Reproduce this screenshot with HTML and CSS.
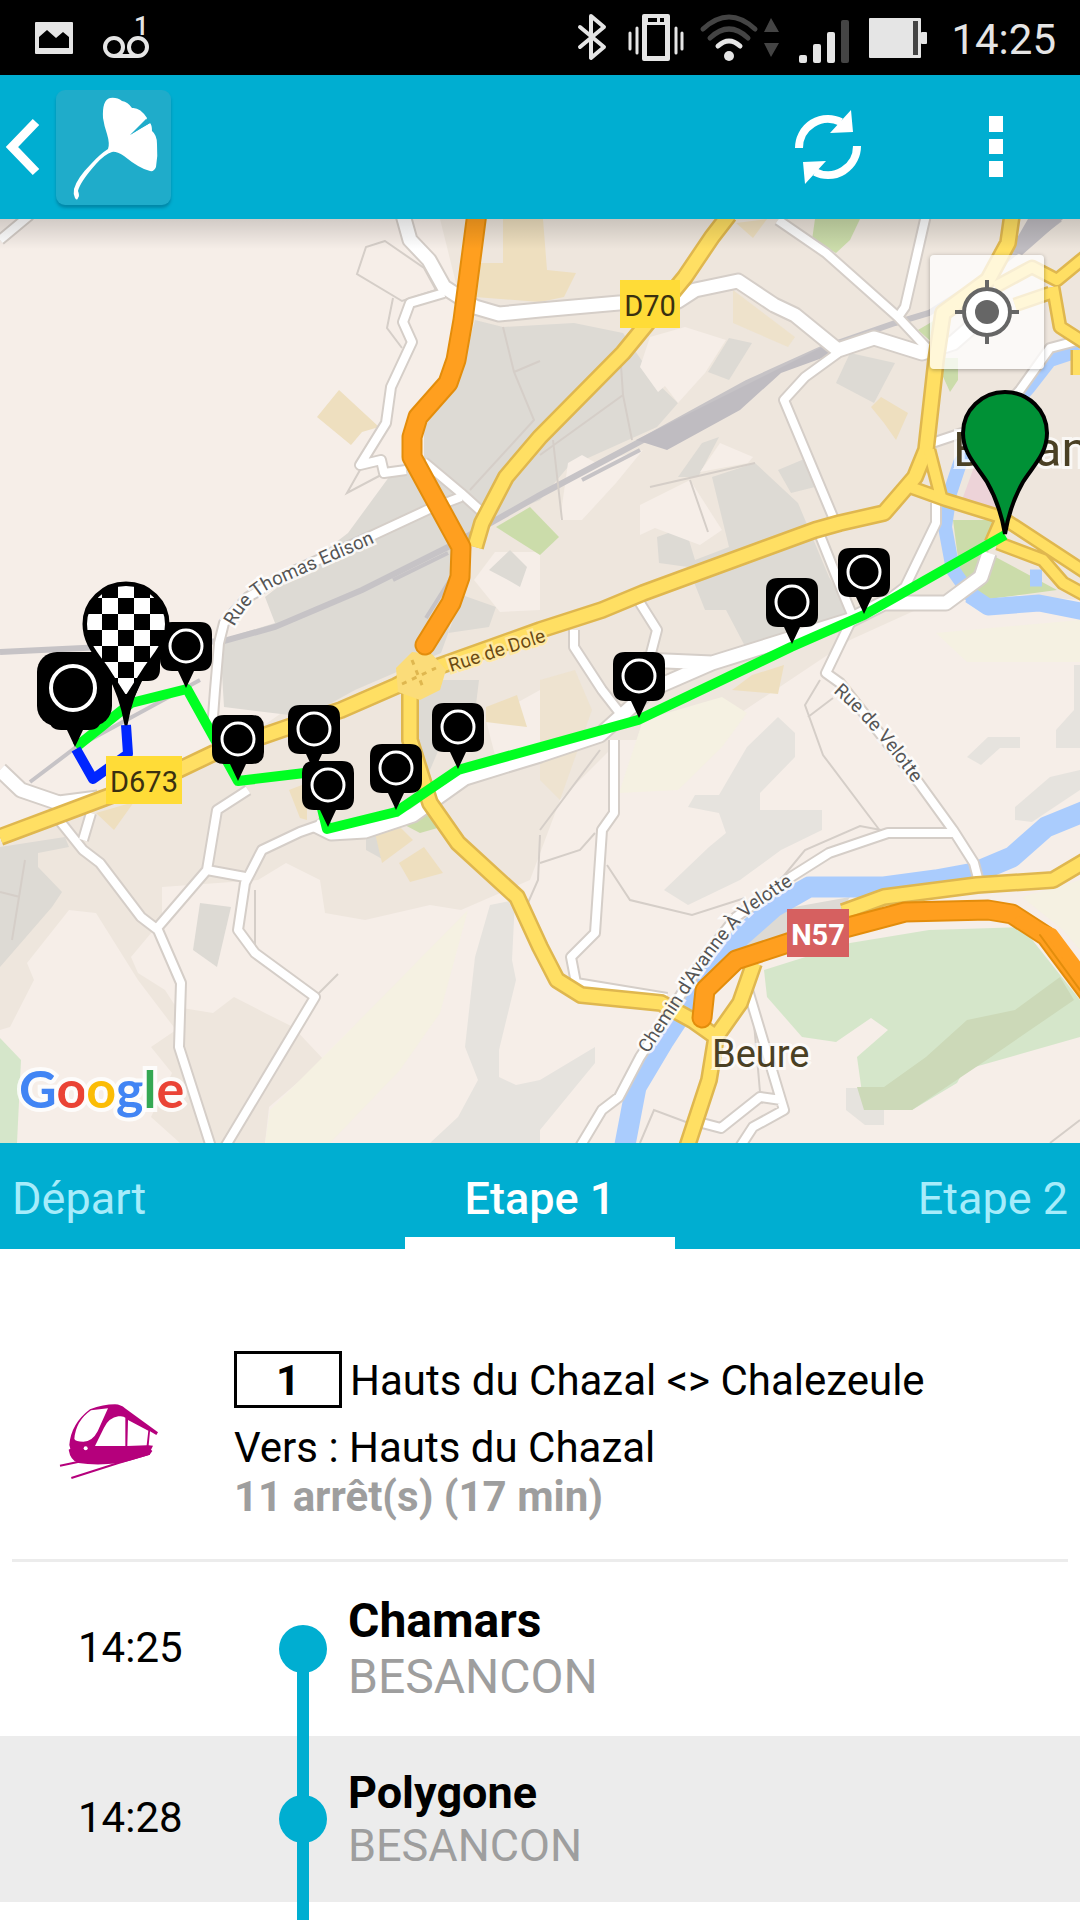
FILE: index.html
```html
<!DOCTYPE html>
<html lang="fr">
<head>
    <meta charset="UTF-8">
    <meta name="viewport" content="width=device-width, initial-scale=1.0">
    <title>Itinéraire - Etape 1</title>
    <link rel="stylesheet" href="styles.css">
</head>
<body>
<div class="app">

    <!-- Barre d'état -->
    <div class="status-bar">
        <div class="status-left">
            <svg width="38" height="75" viewBox="0 0 38 75">
                <path fill="#e5e5e5" fill-rule="evenodd" d="M1 22H37Q38 22 38 23V53Q38 54 37 54H1Q0 54 0 53V23Q0 22 1 22ZM4 48H34V37L28 32L21 38L12 30L4 37Z"/>
            </svg>
            <svg width="46" height="75" viewBox="0 0 46 75">
                <g fill="none" stroke="#e5e5e5" stroke-width="4">
                    <circle cx="11" cy="47" r="9"/>
                    <circle cx="35" cy="47" r="9"/>
                    <path d="M11 56H35"/>
                </g>
                <text class="badge-count" x="31" y="35">1</text>
            </svg>
        </div>
        <div class="status-right">
            <svg width="28" height="75" viewBox="0 0 28 75">
                <path fill="none" stroke="#e5e5e5" stroke-width="4" stroke-linecap="round" stroke-linejoin="round" d="M2 27L26 47L13 58V16L26 27L2 47"/>
            </svg>
            <svg class="icon-vibrate" width="55" height="75" viewBox="-2 0 55 75">
                <path fill="#e5e5e5" fill-rule="evenodd" d="M16 14H40Q42 14 42 16V59Q42 61 40 61H16Q14 61 14 59V16Q14 14 16 14ZM19 25V56H37V25ZM20 18V22H29V18ZM32 18V22H36V18Z"/>
                <path stroke="#e5e5e5" stroke-width="3" stroke-linecap="round" d="M2 33V49M9 28V53M48 28V53M54 33V49"/>
            </svg>
            <svg width="78" height="75" viewBox="0 0 78 75">
                <g fill="none" stroke-width="5" stroke-linecap="round">
                    <path stroke="#444" d="M2 29Q28 5 54 29M9 38Q28 20 47 38"/>
                    <path stroke="#e5e5e5" d="M17 46Q28 36 39 46"/>
                </g>
                <circle cx="28" cy="56" r="5" fill="#e5e5e5"/>
                <path fill="#444" d="M70 18L78 32H63ZM63 43H78L70 57Z"/>
            </svg>
            <svg width="50" height="75" viewBox="0 0 50 75">
                <g fill="#e5e5e5">
                    <rect x="0" y="55" width="8" height="8" rx="2"/>
                    <rect x="14" y="44" width="8" height="19" rx="2"/>
                    <rect x="28" y="32" width="8" height="31" rx="2"/>
                    <rect x="42" y="20" width="8" height="43" rx="2" fill="#444"/>
                </g>
            </svg>
            <svg width="58" height="75" viewBox="0 0 58 75">
                <rect x="0" y="18" width="52" height="40" rx="1" fill="#e5e5e5"/>
                <rect x="44" y="21" width="5" height="34" fill="#444"/>
                <rect x="52" y="32" width="6" height="12" rx="1" fill="#e5e5e5"/>
            </svg>
            <span class="clock">14:25</span>
        </div>
    </div>

    <!-- Barre d'action -->
    <header class="action-bar">
        <button type="button" class="btn-back" aria-label="Retour">
            <svg width="40" height="72" viewBox="0 0 40 72">
                <path fill="none" stroke="#fff" stroke-width="9" d="M36 11L12 36L36 61"/>
            </svg>
            <span class="logo">
                <svg width="115" height="115" viewBox="0 0 115 115">
                    <path fill="#fff" d="M47 28Q46 10 54 8Q61 7 66 11Q72 12 76 18Q84 17 91 28Q90 33 74 45Q88 36 94 33Q96 35 96 41Q101 45 101 54Q102 66 100 77Q98 82 94 81Q84 79 68 66Q60 61 56 62Q49 64 40 74Q24 92 22 101Q24 106 22 108Q21 111 19 108Q17 104 18 99Q21 88 35 74Q44 64 52 59Q54 54 51 44Q48 35 47 28Z"/>
                    <path fill="#1facca" d="M74 45L90 29L94 33Z"/>
                </svg>
            </span>
        </button>
        <button type="button" class="btn-action" aria-label="Actualiser">
            <svg width="66" height="74" viewBox="0 0 66 74">
                <path fill="none" stroke="#fff" stroke-width="8" d="M4 38A29 29 0 0 1 46 12M62 36A29 29 0 0 1 20 62"/>
                <path fill="#fff" d="M56 0L58 22L35 23ZM10 74L8 52L31 51Z"/>
            </svg>
        </button>
        <button type="button" class="btn-action" aria-label="Plus d'options">
            <svg width="14" height="62" viewBox="0 0 14 62">
                <path fill="#fff" d="M0 0H14V16H0ZM0 23H14V38H0ZM0 45H14V61H0Z"/>
            </svg>
        </button>
    </header>

    <!-- Carte -->
    <section class="map">
        <svg class="map-canvas" viewBox="0 219 1080 924" preserveAspectRatio="xMidYMid slice" role="img" aria-label="Carte du trajet">
            <defs>
                <g id="stop">
                    <path d="M-14 -66H14Q26 -66 26 -54V-29Q26 -17 14 -17H8L0 0L-8 -17H-14Q-26 -17 -26 -29V-54Q-26 -66 -14 -66Z"/>
                    <circle cx="0" cy="-42" r="16" fill="none" stroke="#fff" stroke-width="3"/>
                </g>
                <path id="pin" d="M0 0C-4 -24 -10 -38 -18 -52C-28 -68 -42 -80 -42 -101A42 41 0 0 1 42 -101C42 -80 28 -68 18 -52C10 -38 4 -24 0 0Z"/>
                <clipPath id="pinClip"><path d="M0 -30L-18 -58C-28 -72 -39 -84 -39 -101A39 38 0 0 1 39 -101C39 -84 28 -72 18 -58Z"/></clipPath>
                <path id="edison" d="M234 627Q250 596 280 584L392 535"/>
                <path id="dole" d="M451 672L575 632"/>
                <path id="velotte" d="M833 692Q884 736 928 806"/>
                <path id="chemin" d="M648 1054L688 993Q724 936 754 910L812 872"/>
            </defs>

            <rect x="0" y="219" width="1080" height="924" fill="#f6eee8"/>

            <!-- zones urbaines -->
            <path fill="#eee6dd" d="M440 219H1080V600L960 590L850 640L700 740L620 740L560 800L530 880L461 910L430 905L365 920L325 913L320 880L286 863L258 880L162 887V920L131 957L138 973L165 990L176 1007L213 1013L234 997L265 1013L293 1027L324 1060L269 1107L265 1143H180L151 1117L172 1073L151 1047L176 1030L138 980L96 913L69 910L27 963L34 980L10 1027L0 1030V840L200 770L300 700L440 640L470 540L480 380Z"/>
            <g fill="#f5f1e2">
                <path d="M468 910L440 1013L400 1070L330 1143H265L270 1110L350 1030Z"/>
                <path d="M643 720L722 697L747 713L722 747L678 790L619 793Z"/>
                <path d="M936 633L1080 620V662H967Z"/>
                <path d="M1080 880V950L1063 930L1022 897Z"/>
            </g>
            <g fill="#e6e3de">
                <path d="M490 905L515 900L512 960L516 980L499 1050V1077L516 1085L540 1080L595 1047V1063L540 1130V1143H430L458 1117L478 1080L465 1047L475 957Z"/>
                <path d="M778 717L795 733V757L760 793V810H822V830L781 850L740 880L688 905L664 890L709 847L726 833L719 813L688 807L695 795H719L747 747Z"/>
                <path d="M967 757L988 737H1020V748H1000L981 765Z"/>
                <path d="M1080 770L1050 777L1015 807V820L1032 822L1080 790Z"/>
                <path d="M846 1088H884V1125H865L846 1110Z"/>
                <path d="M1074 665H1080V748H1056V730L1074 710Z"/>
            </g>
            <g fill="#dddad4">
                <path d="M475 320L503 327L574 323L623 333L657 383L678 403L657 427L568 467L540 500L499 517L475 530L448 633L489 627L496 607L462 595L441 653L355 690L306 717L224 707L220 640L275 623L265 597L348 533L389 477L424 462V427L458 383Z"/>
                <path d="M836 383L850 353L895 363L874 403Z"/>
                <path d="M712 477L755 463L798 503L829 577L850 613L747 650L726 610H705L688 567L659 563L657 537L685 527L695 560L729 547Z"/>
                <path d="M778 470L809 457L815 487L791 493Z"/>
                <path d="M702 443L719 437L698 477H678Z"/>
                <path d="M729 338L752 343L729 380L708 372Z"/>
                <path d="M736 940L760 913L850 897L840 912L733 960Z"/>
                <path d="M200 903L231 907L217 967L193 950Z"/>
                <path d="M0 847L65 837L69 847L38 853V867L62 892L52 907L0 967Z"/>
                <path d="M417 680H479L475 713L444 737L427 777L413 730Z"/>
                <path d="M366 830H376L384 860L366 850Z"/>
            </g>
            <g fill="#f6eee8">
                <path d="M650 337L685 327L726 340L705 373L678 403L665 386L658 392L640 367Z"/>
                <path d="M560 520L568 463L582 455L596 463L643 450L616 483L582 520Z"/>
                <path d="M640 505L690 480L722 530L700 545L655 528L640 535Z"/>
                <path d="M700 472L720 443L753 457L748 463Z"/>
                <path d="M474 580L495 552H540V610L500 612Z"/>
                <path d="M486 720L540 690V760L500 775Z"/>
            </g>
            <path fill="#dddad4" d="M489 570L510 550L527 567L520 587L508 580Z"/>
            <g fill="#eedfbf">
                <path d="M503 219H543L547 270L576 273L564 297L540 302L475 297L479 263H503Z"/>
                <path d="M339 390L379 427L362 432L351 445L317 417Z"/>
                <path d="M733 290L795 337L788 347L733 323Z" opacity="0.6"/>
                <path d="M881 397L908 413L896 440L884 423L871 407Z"/>
                <path d="M736 223L767 219L753 238Z"/>
                <path d="M96 813L134 802L114 830Z"/>
                <path d="M486 707L517 695L527 727L486 722Z"/>
                <path d="M375 833L396 823L413 840L382 863Z"/>
                <path d="M399 863L424 847L443 873L410 882Z"/>
                <path d="M289 790L307 783V820L300 818Z"/>
                <path d="M732 690L752 675L784 665L778 694Z"/>
                <path d="M540 680L575 670L592 710L560 800L540 780Z" opacity="0.4"/>
            </g>
            <g fill="#cbdcaa">
                <path d="M815 219H860L850 240L836 253L812 240Z"/>
                <path d="M530 507L559 537L540 555L496 527Z"/>
                <path d="M953 520H995L988 553L1057 590L981 600L960 573Z"/>
                <path d="M399 822L424 812L441 827L420 833Z"/>
                <path d="M918 330L935 320V345ZM940 358H958V380L950 392L940 370Z"/>
            </g>
            <path fill="#edd3d8" d="M974 467L1022 487L1008 512L962 500Z"/>
            <path fill="#d5e6ca" d="M764 970L850 943L929 930L1022 927L1080 1000V1037L964 1070L957 1083L912 1110L864 1107L857 1057L888 1030L871 1018L836 1042L802 1037L767 997Z"/>
            <path fill="#ccd9b8" d="M857 1087H884L926 1057L967 1020L1015 1010L1060 977L1074 1000L991 1057L912 1110L864 1110Z"/>
            <path fill="#d5e6ca" d="M0 1038L21 1060L17 1143H0Z"/>

            <!-- rivière -->
            <g fill="none" stroke="#aaccfd" stroke-linejoin="round">
                <path stroke-width="14" d="M1080 350L1050 360L1029 387L960 463L950 493L945 527L953 570L974 600"/>
                <path stroke-width="17" d="M970 595L988 607L1039 603L1085 612M1030 578H1042"/>
                <path stroke-width="21" d="M1085 811L1046 827L1012 857L974 873L936 880L884 887H809L774 907L740 937L692 997L664 1040L636 1087L624 1150"/>
            </g>

            <!-- voie ferrée -->
            <path fill="none" stroke="#c6c3c6" stroke-width="6" d="M0 652L83 648L224 641L275 627L362 590L448 547L540 495L643 440L747 383L826 347L895 323L929 313L981 280L1022 247L1060 219"/>
            <path fill="#bfbcc1" d="M636 440L822 347L836 353L781 373L740 410L667 450ZM1028 219H1063L1022 255L1010 250Z"/>
            <path fill="none" stroke="#c6c3c6" stroke-width="4" d="M393 580L448 553M426 618L450 580M582 480L640 450M30 782L75 748L200 680"/>

            <!-- chemins -->
            <g fill="none" stroke="#d5cec8" stroke-width="2">
                <path d="M385 241L366 247L357 274L402 301L436 290L424 268ZM393 298L387 328L402 348M360 470L347 493L381 475"/>
                <path d="M503 327L514 372L534 420L470 490M514 372L540 361M620 350L623 395L540 455M553 440L562 520M623 395L632 440M690 480L708 532M650 487L755 463"/>
                <path d="M540 830L600 750M540 863L580 850L595 833M607 865L630 900L692 915L745 898M820 680L805 705L823 755L881 832M808 717L833 698M782 878L805 850L860 826L881 830M752 1000L760 1092M640 1143L654 1110L702 1128M1050 1143L1080 1120"/>
                <path d="M255 890V960M315 997L338 974M0 892L20 897M25 860L12 940M540 835L538 880L527 905"/>
            </g>

            <!-- routes blanches -->
            <g fill="none" stroke-linejoin="round">
                <g stroke="#d5cec8">
                    <path stroke-width="17" d="M403 215L410 240L429 260L444 287L475 307L499 314L540 310L619 303L678 301L695 290L738 281L774 305L795 315L838 350L874 338L922 353L953 343L985 315"/>
                    <path stroke-width="12" d="M444 293L410 303L403 322L412 342L391 387L386 423L360 465L381 460L384 473L406 470M424 462L461 493L482 512M461 497L427 510L369 537L296 570L248 597L224 623L219 643L215 690L212 730M778 220L826 253L898 317L926 347M926 215L905 307L898 317M838 353L805 377L784 400L833 517M819 533L843 593L853 617L826 673L840 683L919 783L953 830L974 863L979 882M953 833H888L829 853L791 877L736 917L705 957L671 1010L640 1057L619 1097L602 1110L578 1150M936 503V523L905 587L884 603M574 630V647L602 690L623 717M640 603L657 630L650 657M614 740V813L602 830L595 933L571 957L576 983L667 998M748 990L784 1110L753 1127L738 1150M702 1123L721 1128L760 1097L781 1100M59 820L83 850L100 863L141 917L158 930L181 983L179 1047L212 1150M91 813L83 840M248 790L217 810L207 870L158 927M207 870L245 877M320 825L300 832L262 850L245 883L238 930L255 953L315 997L225 1147M1080 340L1050 348L1020 390L990 425M932 443L965 432M0 240L30 215"/>
                    <path stroke-width="17" d="M0 770L21 790L59 803L98 798M989 553L981 577L946 603H884L850 620L712 663L643 660M712 663L650 690L600 735L540 755L465 778L413 815L365 831L331 833L315 825"/>
                </g>
                <g stroke="#fff">
                    <path stroke-width="13" d="M403 215L410 240L429 260L444 287L475 307L499 314L540 310L619 303L678 301L695 290L738 281L774 305L795 315L838 350L874 338L922 353L953 343L985 315"/>
                    <path stroke-width="8" d="M444 293L410 303L403 322L412 342L391 387L386 423L360 465L381 460L384 473L406 470M424 462L461 493L482 512M461 497L427 510L369 537L296 570L248 597L224 623L219 643L215 690L212 730M778 220L826 253L898 317L926 347M926 215L905 307L898 317M838 353L805 377L784 400L833 517M819 533L843 593L853 617L826 673L840 683L919 783L953 830L974 863L979 882M953 833H888L829 853L791 877L736 917L705 957L671 1010L640 1057L619 1097L602 1110L578 1150M936 503V523L905 587L884 603M574 630V647L602 690L623 717M640 603L657 630L650 657M614 740V813L602 830L595 933L571 957L576 983L667 998M748 990L784 1110L753 1127L738 1150M702 1123L721 1128L760 1097L781 1100M59 820L83 850L100 863L141 917L158 930L181 983L179 1047L212 1150M91 813L83 840M248 790L217 810L207 870L158 927M207 870L245 877M320 825L300 832L262 850L245 883L238 930L255 953L315 997L225 1147M1080 340L1050 348L1020 390L990 425M932 443L965 432M0 240L30 215"/>
                    <path stroke-width="13" d="M0 770L21 790L59 803L98 798M989 553L981 577L946 603H884L850 620L712 663L643 660M712 663L650 690L600 735L540 755L465 778L413 815L365 831L331 833L315 825"/>
                </g>
            </g>

            <!-- départementales -->
            <g fill="none" stroke-linejoin="round">
                <g stroke="#dfb74f" stroke-width="18">
                    <path d="M0 837L59 815L107 797L172 773L214 753L289 727L341 710L396 686L420 673L540 630L602 610L643 593L815 530L840 523L884 513L915 477L926 450L936 360L943 313L988 280L1008 243L1012 215"/>
                    <path d="M729 215L712 237L685 277L623 353L540 437L506 477L482 523L475 547"/>
                    <path d="M410 680V740L430 803L458 843L517 897L540 947L557 980L581 995L661 1003L692 1020L716 1037L709 1080L686 1150M716 1037L740 1003L754 963"/>
                    <path d="M843 912L884 897L977 885L1053 880L1085 861"/>
                    <path stroke-width="15" d="M910 487L946 500L1001 517L1085 572M929 450L941 497M998 543L1043 560L1063 583L1085 595M1001 520L991 543M1085 257L1057 280L1032 267L995 287M1053 287L1060 327L1085 343M1015 305L1050 293M1078 350V375"/>
                </g>
                <g stroke="#ffdf63" stroke-width="13">
                    <path d="M0 837L59 815L107 797L172 773L214 753L289 727L341 710L396 686L420 673L540 630L602 610L643 593L815 530L840 523L884 513L915 477L926 450L936 360L943 313L988 280L1008 243L1012 215"/>
                    <path d="M729 215L712 237L685 277L623 353L540 437L506 477L482 523L475 547"/>
                    <path d="M410 680V740L430 803L458 843L517 897L540 947L557 980L581 995L661 1003L692 1020L716 1037L709 1080L686 1150M716 1037L740 1003L754 963"/>
                    <path d="M843 912L884 897L977 885L1053 880L1085 861"/>
                    <path stroke-width="10" d="M910 487L946 500L1001 517L1085 572M929 450L941 497M998 543L1043 560L1063 583L1085 595M1001 520L991 543M1085 257L1057 280L1032 267L995 287M1053 287L1060 327L1085 343M1015 305L1050 293M1078 350V375"/>
                </g>
                <path fill="#fbdc79" d="M396 668L412 652L432 654L446 670L440 690L420 700L398 692Z"/>
                <path stroke="#dfb74f" stroke-width="3" stroke-dasharray="5 6" d="M402 684L436 668M412 660L424 690"/>
            </g>

            <!-- voies rapides -->
            <g fill="none" stroke-linejoin="round" stroke-linecap="round">
                <path stroke="#e38d0c" stroke-width="21" d="M478 205L463 320L456 360L448 383L418 417L412 437V457L461 547L460 577L451 603L425 645M702 1018L705 990L736 960L788 943L905 912L988 910L1012 914L1046 936L1090 995"/>
                <path stroke="#ff9f1f" stroke-width="17" d="M478 205L463 320L456 360L448 383L418 417L412 437V457L461 547L460 577L451 603L425 645M702 1018L705 990L736 960L788 943L905 912L988 910L1012 914L1046 936L1090 995"/>
                <path stroke="#ff9f1f" stroke-width="12" d="M1020 922L1052 934L1090 985"/>
                <path stroke="#e38d0c" stroke-width="2" d="M1040 935L1080 990"/>
            </g>

            <!-- noms des lieux -->
            <g class="street-name">
                <text><textPath href="#edison">Rue Thomas Edison</textPath></text>
                <text><textPath href="#velotte">Rue de Velotte</textPath></text>
                <text><textPath href="#chemin">Chemin d'Avanne À Velotte</textPath></text>
                <text class="street-main"><textPath href="#dole">Rue de Dole</textPath></text>
            </g>
            <text class="city" x="953" y="466">Besançon</text>
            <text class="town" x="712" y="1067">Beure</text>

            <!-- tracé -->
            <path fill="none" stroke="#00ff22" stroke-width="10" stroke-linejoin="round" d="M76 747L131 703L187 689L238 781L313 772L327 829L396 812L458 770L638 720L791 647L864 615L1005 535"/>
            <path fill="none" stroke="#0026ff" stroke-width="10" stroke-linejoin="round" d="M76 749L93 779L128 754L126 725"/>

            <g class="road-sign">
                <rect x="620" y="280" width="60" height="48"/>
                <text x="650" y="316">D70</text>
                <rect x="106" y="756" width="76" height="48"/>
                <text x="144" y="792">D673</text>
            </g>
            <g class="road-sign road-sign-red">
                <rect x="787" y="909" width="62" height="48"/>
                <text x="818" y="945">N57</text>
            </g>

            <!-- arrêts -->
            <use href="#stop" x="134" y="698"/>
            <use href="#stop" x="186" y="688"/>
            <use href="#stop" x="75" y="747"/>
            <rect x="37" y="652" width="75" height="74" rx="20"/>
            <circle cx="73" cy="688" r="22" fill="none" stroke="#fff" stroke-width="4"/>
            <use href="#stop" x="238" y="781"/>
            <use href="#stop" x="314" y="771"/>
            <use href="#stop" x="328" y="827"/>
            <use href="#stop" x="396" y="810"/>
            <use href="#stop" x="458" y="769"/>
            <use href="#stop" x="639" y="718"/>
            <use href="#stop" x="792" y="644"/>
            <use href="#stop" x="864" y="614"/>

            <!-- arrivée et départ -->
            <g transform="translate(126 725)">
                <use href="#pin" stroke="#000" stroke-width="3"/>
                <path clip-path="url(#pinClip)" fill="#fff" d="M-40 -140h16v13h-16zM-8 -140h16v13h-16zM24 -140h16v13h-16zM-24 -127h16v16h-16zM8 -127h16v16h-16zM-40 -111h16v16h-16zM-8 -111h16v16h-16zM24 -111h16v16h-16zM-24 -95h16v16h-16zM8 -95h16v16h-16zM-40 -79h16v16h-16zM-8 -79h16v16h-16zM24 -79h16v16h-16zM-24 -63h16v16h-16zM8 -63h16v16h-16zM-8 -47h16v16h-16z"/>
            </g>
            <g transform="translate(1005 534)">
                <use href="#pin" fill="#009136" stroke="#000" stroke-width="4"/>
            </g>

            <text class="google" x="19" y="1108"><tspan fill="#4285f4">G</tspan><tspan fill="#ea4335">o</tspan><tspan fill="#fbbc05">o</tspan><tspan fill="#4285f4">g</tspan><tspan fill="#34a853">l</tspan><tspan fill="#ea4335">e</tspan></text>
        </svg>
        <button type="button" class="btn-locate" aria-label="Ma position">
            <svg width="66" height="66" viewBox="0 0 66 66">
                <circle cx="33" cy="33" r="23" fill="#fff" stroke="#666" stroke-width="4"/>
                <circle cx="33" cy="33" r="12" fill="#666"/>
                <path stroke="#666" stroke-width="4" d="M33 1V10M33 56V65M1 33H10M56 33H65"/>
            </svg>
        </button>
    </section>

    <!-- Onglets -->
    <nav class="tabs" role="tablist">
        <button type="button" class="tab" role="tab">Départ</button>
        <button type="button" class="tab tab-active" role="tab" aria-selected="true">Etape 1</button>
        <button type="button" class="tab tab-end" role="tab">Etape 2</button>
    </nav>

    <main class="step">
        <section class="line-info">
            <div class="line-icon">
                <svg width="108" height="88" viewBox="84 35 324 264">
                    <path fill="#b5007c" d="M165 87Q205 72 240 72Q258 73 270 84L369 156L364 164L345 153L341 195L354 196L348 208L352 212L344 223Q290 240 250 249Q180 256 130 248Q106 240 101 208L106 205L103 194Q108 130 165 87Z"/>
                    <path fill="#fff" d="M168 90L219 84L188 153Q172 184 145 184Q122 184 118 176Q122 122 168 90ZM180 197L207 142Q222 112 250 108Q266 106 271 112V197ZM279 119L340 151L335 195L277 197Z"/>
                    <circle cx="152" cy="204" r="6" fill="#fff"/>
                    <path fill="none" stroke="#b5007c" stroke-width="6" d="M75 256L132 244M109 293L250 248L344 220"/>
                </svg>
            </div>
            <div class="line-text">
                <div class="line-title">
                    <span class="line-number">1</span>
                    <span>Hauts du Chazal &lt;&gt; Chalezeule</span>
                </div>
                <div>Vers : Hauts du Chazal</div>
                <div class="line-meta">11 arrêt(s) (17 min)</div>
            </div>
        </section>

        <ul class="stops">
            <li class="stop stop-first">
                <time class="stop-time">14:25</time>
                <div class="stop-track"></div>
                <div>
                    <div class="stop-name">Chamars</div>
                    <div class="stop-city">BESANCON</div>
                </div>
            </li>
            <li class="stop stop-alt">
                <time class="stop-time">14:28</time>
                <div class="stop-track"></div>
                <div>
                    <div class="stop-name">Polygone</div>
                    <div class="stop-city">BESANCON</div>
                </div>
            </li>
            <li class="stop">
                <span></span>
                <div class="stop-track"></div>
            </li>
        </ul>
    </main>
</div>
</body>
</html>
```

FILE: styles.css
```css
* {
    box-sizing: border-box;
}
body {
    margin: 0;
    background-color: #fff;
    color: #000;
    font-family: Roboto, sans-serif;
    font-size: 42px;
    line-height: 49px;
}
button {
    padding: 0;
    border: 0;
    background: none;
    color: inherit;
    font: inherit;
    cursor: pointer;
}
svg {
    display: block;
    overflow: visible;
}
.app {
    display: flex;
    flex-direction: column;
    height: 100vh;
    overflow: hidden;
}

/* Barre d'état */
.status-bar {
    display: flex;
    flex: none;
    justify-content: space-between;
    height: 75px;
    padding: 0 24px 0 35px;
    background-color: #000;
    color: #e5e5e5;
}
.status-left,
.status-right {
    display: flex;
    align-items: center;
}
.status-left {
    gap: 30px;
}
.status-right {
    gap: 20px;
}
.badge-count {
    fill: #e5e5e5;
    font-size: 26px;
    font-weight: 500;
}
.clock {
    padding: 4px 0 0 4px;
}

/* Barre d'action */
.action-bar {
    display: flex;
    flex: none;
    align-items: center;
    height: 144px;
    background-color: #00aed1;
}
.btn-back {
    display: flex;
    align-items: center;
    gap: 16px;
    margin-right: auto;
}
.logo {
    border-radius: 9px;
    background-color: #1facca;
    box-shadow: 0 3px 3px rgba(0, 80, 110, 0.4);
}
.btn-action {
    display: flex;
    align-items: center;
    justify-content: center;
    width: 168px;
    height: 100%;
}

/* Carte */
.map {
    position: relative;
    flex: none;
    aspect-ratio: 1080 / 924;
    overflow: hidden;
}
.map::before {
    content: "";
    position: absolute;
    top: 0;
    left: 0;
    right: 0;
    height: 30px;
    background: linear-gradient(rgba(0, 0, 0, 0.15), rgba(0, 0, 0, 0));
}
.map-canvas {
    width: 100%;
    height: 100%;
    overflow: hidden;
}
.street-name {
    fill: #555;
    stroke: rgba(255, 255, 255, 0.8);
    stroke-width: 5px;
    paint-order: stroke;
    font-size: 19px;
}
.street-main {
    fill: #6b4a12;
    stroke: #ffe9a0;
}
.city,
.town {
    fill: #4a4024;
    stroke: rgba(255, 255, 255, 0.7);
    stroke-width: 6px;
    paint-order: stroke;
    font-size: 38px;
}
.city {
    font-size: 49px;
}
.road-sign {
    fill: #ffdc37;
    font-size: 29px;
    text-anchor: middle;
}
.road-sign text {
    fill: #3a3010;
}
.road-sign-red {
    fill: #d66060;
    font-weight: bold;
}
.road-sign-red text {
    fill: #fff;
}
.google {
    stroke: rgba(255, 255, 255, 0.8);
    stroke-width: 8px;
    paint-order: stroke;
    font-family: Lato, sans-serif;
    font-size: 52px;
    font-weight: bold;
}
.btn-locate {
    position: absolute;
    top: 36px;
    right: 36px;
    display: flex;
    align-items: center;
    justify-content: center;
    width: 114px;
    height: 114px;
    border-radius: 4px;
    background-color: rgba(255, 255, 255, 0.75);
    box-shadow: 0 1px 4px rgba(0, 0, 0, 0.3);
}

/* Onglets */
.tabs {
    display: flex;
    flex: none;
    height: 106px;
    background-color: #00aed1;
}
.tab {
    flex: 1;
    padding: 16px 12px 0;
    border-bottom: 12px solid transparent;
    color: #a6ecfb;
    font-size: 45px;
    text-align: left;
}
.tab-active {
    flex: 0 0 25%;
    border-bottom-color: #fff;
    color: #fff;
    font-weight: 500;
    text-align: center;
}
.tab-end {
    text-align: right;
}

/* Etape */
.step {
    flex: 1;
    min-height: 0;
    overflow: hidden;
}
.line-info {
    display: grid;
    grid-template-columns: 222px 1fr;
    align-items: center;
    margin: 0 12px;
    padding: 102px 0 38px;
    border-bottom: 3px solid #ececec;
}
.line-icon {
    padding-left: 51px;
}
.line-title {
    display: flex;
    align-items: baseline;
    gap: 8px;
    margin-bottom: 15px;
}
.line-number {
    width: 108px;
    padding-top: 2px;
    border: 3px solid #000;
    font-weight: bold;
    text-align: center;
}
.line-meta {
    color: #9e9e9e;
    font-weight: bold;
}

/* Liste des arrêts */
.stops {
    margin: 0;
    padding: 0;
    list-style: none;
}
.stop {
    display: grid;
    grid-template-columns: 258px 90px 1fr;
    align-items: center;
    height: 166px;
    font-size: 45px;
    line-height: 53px;
}
.stop-first {
    height: 174px;
    font-size: 48px;
    line-height: 56px;
}
.stop-alt {
    background-color: #ececec;
}
.stop-time {
    padding: 0 0 4px 78px;
    font-size: 42px;
    line-height: 49px;
}
.stop-track {
    display: flex;
    align-items: center;
    justify-content: center;
    height: 100%;
    background: linear-gradient(#00aed1, #00aed1) center / 12px 100% no-repeat;
}
.stop-first .stop-track {
    background-position: center bottom;
    background-size: 12px 50%;
}
.stop-track::before {
    content: "";
    width: 48px;
    height: 48px;
    border-radius: 50%;
    background-color: #00aed1;
}
.stop-name {
    font-weight: bold;
}
.stop-city {
    color: #9e9e9e;
}
```
